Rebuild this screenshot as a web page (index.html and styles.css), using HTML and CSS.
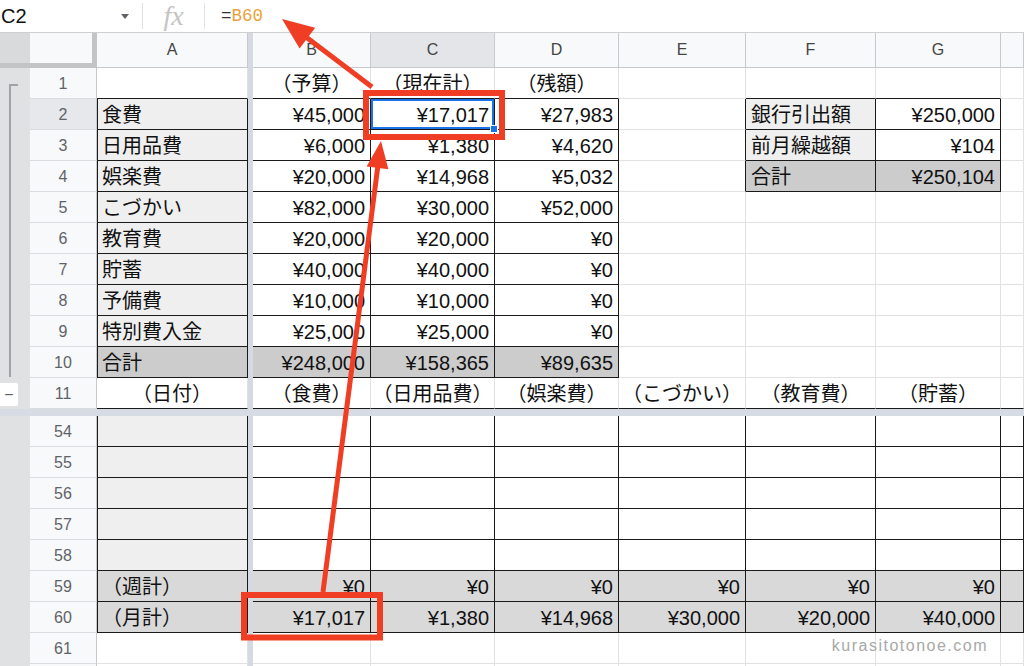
FILE: index.html
```html
<!DOCTYPE html>
<html lang="ja">
<head>
<meta charset="utf-8">
<title>家計簿</title>
<link rel="stylesheet" href="styles.css">
</head>
<body>
<div class="app">
  <div class="fbar">
    <div class="namebox"><span>C2</span><span class="caret"></span></div>
    <div class="sep"></div>
    <div class="fx">fx</div>
    <div class="sep"></div>
    <div class="formula"><span class="eq">=</span><span class="ref">B60</span></div>
  </div>

  <div class="sheet">
    <div class="corner"></div>
    <div class="gutter gtop"><span class="bracket"></span><span class="collapse">−</span></div>
    <div class="gutter gbot"></div>
    <div class="fz fztop"></div>
    <div class="fz fzbot"></div>
    <div class="hdiv"></div>

    <!-- column headers -->
    <div class="ch">A</div><div class="ch">B</div><div class="ch sel">C</div><div class="ch">D</div><div class="ch">E</div><div class="ch">F</div><div class="ch">G</div><div class="ch"></div>

    <!-- row 1 -->
    <div class="rh">1</div><div class="c bb"></div><div class="c m bb">（予算）</div><div class="c m bb">（現在計）</div><div class="c m bb">（残額）</div><div class="c"></div><div class="c bb"></div><div class="c bb"></div><div class="c"></div>
    <!-- row 2 -->
    <div class="rh sel">2</div><div class="c g1 bl br bb">食費</div><div class="c r br bb">¥45,000</div><div class="c r br bb selc">¥17,017<span class="handle"></span></div><div class="c r br bb">¥27,983</div><div class="c br"></div><div class="c g1 br bb">銀行引出額</div><div class="c r br bb">¥250,000</div><div class="c"></div>
    <!-- row 3 -->
    <div class="rh">3</div><div class="c g1 bl br bb">日用品費</div><div class="c r br bb">¥6,000</div><div class="c r br bb">¥1,380</div><div class="c r br bb">¥4,620</div><div class="c br"></div><div class="c g1 br bb">前月繰越額</div><div class="c r br bb">¥104</div><div class="c"></div>
    <!-- row 4 -->
    <div class="rh">4</div><div class="c g1 bl br bb">娯楽費</div><div class="c r br bb">¥20,000</div><div class="c r br bb">¥14,968</div><div class="c r br bb">¥5,032</div><div class="c br"></div><div class="c g2 br bb">合計</div><div class="c g2 r br bb">¥250,104</div><div class="c"></div>
    <!-- row 5 -->
    <div class="rh">5</div><div class="c g1 bl br bb">こづかい</div><div class="c r br bb">¥82,000</div><div class="c r br bb">¥30,000</div><div class="c r br bb">¥52,000</div><div class="c"></div><div class="c"></div><div class="c"></div><div class="c"></div>
    <!-- row 6 -->
    <div class="rh">6</div><div class="c g1 bl br bb">教育費</div><div class="c r br bb">¥20,000</div><div class="c r br bb">¥20,000</div><div class="c r br bb">¥0</div><div class="c"></div><div class="c"></div><div class="c"></div><div class="c"></div>
    <!-- row 7 -->
    <div class="rh">7</div><div class="c g1 bl br bb">貯蓄</div><div class="c r br bb">¥40,000</div><div class="c r br bb">¥40,000</div><div class="c r br bb">¥0</div><div class="c"></div><div class="c"></div><div class="c"></div><div class="c"></div>
    <!-- row 8 -->
    <div class="rh">8</div><div class="c g1 bl br bb">予備費</div><div class="c r br bb">¥10,000</div><div class="c r br bb">¥10,000</div><div class="c r br bb">¥0</div><div class="c"></div><div class="c"></div><div class="c"></div><div class="c"></div>
    <!-- row 9 -->
    <div class="rh">9</div><div class="c g1 bl br bb">特別費入金</div><div class="c r br bb">¥25,000</div><div class="c r br bb">¥25,000</div><div class="c r br bb">¥0</div><div class="c"></div><div class="c"></div><div class="c"></div><div class="c"></div>
    <!-- row 10 -->
    <div class="rh">10</div><div class="c g2 bl br bb">合計</div><div class="c g2 r br bb">¥248,000</div><div class="c g2 r br bb">¥158,365</div><div class="c g2 r br bb">¥89,635</div><div class="c"></div><div class="c"></div><div class="c"></div><div class="c"></div>
    <!-- row 11 -->
    <div class="rh">11</div><div class="c m bb">（日付）</div><div class="c m bb">（食費）</div><div class="c m bb">（日用品費）</div><div class="c m bb">（娯楽費）</div><div class="c m bb">（こづかい）</div><div class="c m bb">（教育費）</div><div class="c m bb">（貯蓄）</div><div class="c bb"></div>

    <!-- rows 54-58 -->
    <div class="rh">54</div><div class="c g1 bl br bb"></div><div class="c br bb"></div><div class="c br bb"></div><div class="c br bb"></div><div class="c br bb"></div><div class="c br bb"></div><div class="c br bb"></div><div class="c br bb"></div>
    <div class="rh">55</div><div class="c g1 bl br bb"></div><div class="c br bb"></div><div class="c br bb"></div><div class="c br bb"></div><div class="c br bb"></div><div class="c br bb"></div><div class="c br bb"></div><div class="c br bb"></div>
    <div class="rh">56</div><div class="c g1 bl br bb"></div><div class="c br bb"></div><div class="c br bb"></div><div class="c br bb"></div><div class="c br bb"></div><div class="c br bb"></div><div class="c br bb"></div><div class="c br bb"></div>
    <div class="rh">57</div><div class="c g1 bl br bb"></div><div class="c br bb"></div><div class="c br bb"></div><div class="c br bb"></div><div class="c br bb"></div><div class="c br bb"></div><div class="c br bb"></div><div class="c br bb"></div>
    <div class="rh">58</div><div class="c g1 bl br bb"></div><div class="c br bb"></div><div class="c br bb"></div><div class="c br bb"></div><div class="c br bb"></div><div class="c br bb"></div><div class="c br bb"></div><div class="c br bb"></div>
    <!-- row 59 -->
    <div class="rh">59</div><div class="c g3 bl br bb">（週計）</div><div class="c g3 r br bb">¥0</div><div class="c g3 r br bb">¥0</div><div class="c g3 r br bb">¥0</div><div class="c g3 r br bb">¥0</div><div class="c g3 r br bb">¥0</div><div class="c g3 r br bb">¥0</div><div class="c g3 br bb"></div>
    <!-- row 60 -->
    <div class="rh">60</div><div class="c g3 bl br bb">（月計）</div><div class="c g3 r br bb">¥17,017</div><div class="c g3 r br bb">¥1,380</div><div class="c g3 r br bb">¥14,968</div><div class="c g3 r br bb">¥30,000</div><div class="c g3 r br bb">¥20,000</div><div class="c g3 r br bb">¥40,000</div><div class="c g3 br bb"></div>
    <!-- row 61 -->
    <div class="rh">61</div><div class="c"></div><div class="c"></div><div class="c"></div><div class="c"></div><div class="c"></div><div class="c"></div><div class="c"></div><div class="c"></div>
    <!-- row 62 (only its top edge is visible) -->
    <div class="rh"></div><div class="c"></div><div class="c"></div><div class="c"></div><div class="c"></div><div class="c"></div><div class="c"></div><div class="c"></div><div class="c"></div>
  </div>

  <svg class="annot" width="1024" height="666" viewBox="0 0 1024 666" aria-hidden="true">
    <g fill="none" stroke="#ef3e23" stroke-width="6">
      <rect x="366" y="93" width="136" height="44"/>
      <rect x="244" y="595" width="136" height="42.5"/>
    </g>
    <g stroke="#ef3e23" stroke-width="5" stroke-linecap="butt">
      <line x1="323" y1="592" x2="378" y2="165"/>
      <line x1="372" y1="87" x2="306" y2="37"/>
    </g>
    <g fill="#ef3e23">
      <polygon points="381,141 388.4,169.2 366.6,166.4"/>
      <polygon points="282,19 315.2,27.7 299.6,48.5"/>
    </g>
  </svg>

  <div class="wm">kurasitotonoe.com</div>
</div>
</body>
</html>
```

FILE: styles.css
```css
* {
  box-sizing: border-box;
  margin: 0;
  padding: 0;
}

html, body {
  width: 1024px;
  height: 666px;
  overflow: hidden;
  background: #fff;
}

body {
  font-family: "Liberation Sans", "Noto Sans CJK JP", sans-serif;
  color: #111;
}

.app {
  position: relative;
  width: 1024px;
  height: 666px;
  overflow: hidden;
}

/* formula bar */
.fbar {
  height: 33px;
  display: flex;
  align-items: center;
  border-bottom: 1px solid #cfcfcf;
  background: #fff;
}

.namebox {
  width: 142px;
  display: flex;
  align-items: center;
  justify-content: space-between;
  padding: 0 13px 0 1px;
  font-size: 20px;
  color: #111;
}

.caret {
  width: 0;
  height: 0;
  border-left: 4px solid transparent;
  border-right: 4px solid transparent;
  border-top: 5px solid #5f6368;
}

.sep {
  width: 1px;
  height: 26px;
  background: #e2e2e2;
}

.fx {
  width: 61px;
  text-align: center;
  font-family: "Liberation Serif", serif;
  font-style: italic;
  font-size: 28px;
  line-height: 30px;
  color: #c4c4c4;
}

.formula {
  padding-left: 16px;
  font-family: "Liberation Mono", monospace;
  font-size: 17.5px;
}

.eq { color: #333; }
.ref { color: #e9a23b; }

/* sheet grid */
.sheet {
  display: grid;
  grid-template-columns: 30px 67px 151px 5px 118px 124px 124px 127px 130px 125px 23px;
  grid-template-rows: 35px repeat(11, 31px) 7px repeat(9, 31px);
}

.corner {
  grid-column: 1 / 3;
  grid-row: 1;
  background: linear-gradient(90deg, #d9dadc 30px, #f8f9fa 30px);
  border-right: 5px solid #c2c4c6;
  border-bottom: 5px solid #c2c4c6;
}

.gutter {
  grid-column: 1;
  background: #e0e1e3;
}

.gtop {
  grid-row: 2 / 13;
  display: flex;
  flex-direction: column;
  padding: 16px 0 3px 0;
}

.gbot {
  grid-row: 14 / 23;
}

.bracket {
  flex: 1;
  margin-left: 9px;
  width: 9px;
  border-left: 2px solid #a0a2a5;
  border-top: 2px solid #a0a2a5;
  margin-bottom: 6px;
}

.collapse {
  width: 18px;
  height: 23px;
  background: #fff;
  color: #5f6368;
  font-size: 16px;
  line-height: 23px;
  text-align: center;
  border-radius: 0 2px 2px 0;
}

.fz {
  grid-column: 4;
  background: #d5d9e2;
}

.fztop { grid-row: 1 / 13; }
.fzbot { grid-row: 14 / 23; }

.hdiv {
  grid-column: 1 / -1;
  grid-row: 13;
  background: #d7dbe4;
}

/* column header */
.ch {
  background: #f8f9fa;
  border-right: 1px solid #c7c9cc;
  border-bottom: 1px solid #c7c9cc;
  color: #444;
  font-size: 16px;
  line-height: 34px;
  text-align: center;
}

.ch.sel { background: #e3e5e8; }

/* row header */
.rh {
  background: #f8f9fa;
  border-right: 1px solid #c7c9cc;
  border-bottom: 1px solid #dadce0;
  color: #5f6368;
  font-size: 16px;
  line-height: 32px;
  text-align: center;
}

.rh.sel { background: #e6e8eb; }

/* cells */
.c {
  position: relative;
  border-right: 1px solid #e2e2e2;
  border-bottom: 1px solid #e2e2e2;
  padding: 0 5px;
  font-size: 20px;
  line-height: 33px;
  white-space: nowrap;
  background: #fff;
}

.r { text-align: right; }

.m {
  padding: 0;
  display: flex;
  justify-content: center;
}

.g1 { background: #efefef; }
.g2 { background: #cccccc; }
.g3 { background: #d9d9d9; }

.br { border-right-color: #1a1a1a; }
.bb { border-bottom-color: #1a1a1a; }
.bl { box-shadow: inset 1px 0 0 #1a1a1a; }

.selc {
  box-shadow: inset 0 0 0 2px #1a73e8;
  z-index: 1;
}

.handle {
  position: absolute;
  right: -4px;
  bottom: -4px;
  width: 8px;
  height: 8px;
  background: #1a73e8;
  border: 1px solid #fff;
}

/* overlays */
.annot {
  position: absolute;
  left: 0;
  top: 0;
  pointer-events: none;
  z-index: 5;
}

.wm {
  position: absolute;
  right: 36px;
  top: 637px;
  font-size: 16px;
  letter-spacing: 1.5px;
  color: #a8a8a8;
  z-index: 4;
}
```
